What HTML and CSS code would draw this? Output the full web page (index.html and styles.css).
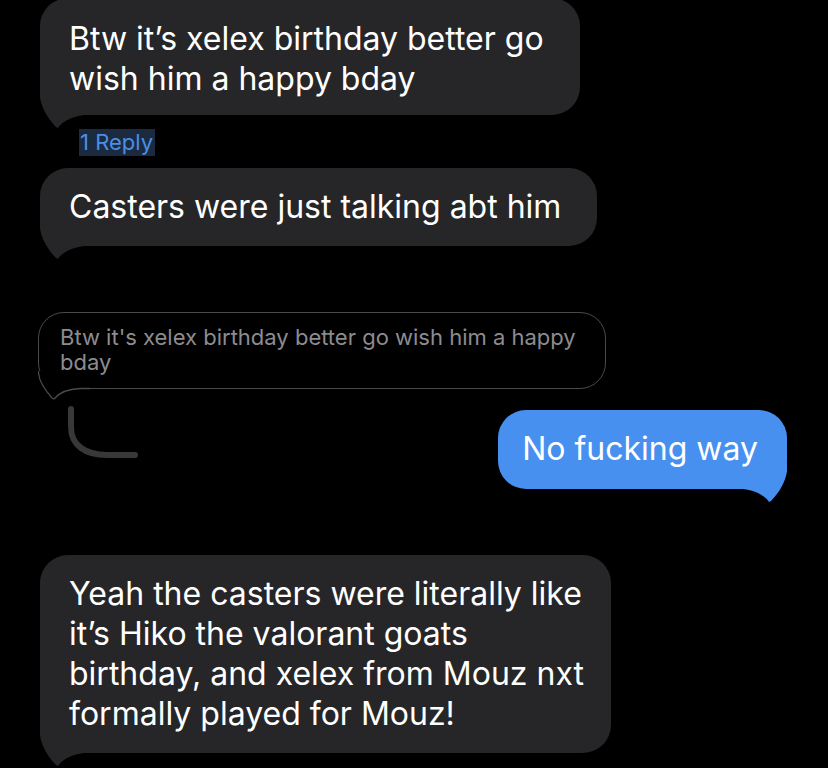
FILE: index.html
```html
<!DOCTYPE html>
<html>
<head>
<meta charset="utf-8">
<link rel="stylesheet" href="styles.css">
</head>
<body>
<div class="chat">
  <div class="bubble gray first">
    <span class="txt">Btw it’s xelex birthday better go<br>wish him a happy bday</span>
    <svg class="tail tail-left" width="50" height="40" viewBox="0 0 50 40"><path d="M0,0 L0,8 C1,18 8,30 16,38 L18,39 C21,34 29,28 44,26 L50,26 L50,0 Z"/></svg>
  </div>
  <div class="reply"><span class="reply-sel">1 Reply</span></div>
  <div class="bubble gray second">
    <span class="txt">Casters were just talking abt him</span>
    <svg class="tail tail-left" width="50" height="40" viewBox="0 0 50 40"><path d="M0,0 L0,8 C1,18 8,30 16,38 L18,39 C21,34 29,28 44,26 L50,26 L50,0 Z"/></svg>
  </div>
  <div class="quote">
    <span class="txt">Btw it's xelex birthday better go wish him a happy<br>bday</span>
    <svg class="qtail" width="52" height="30" viewBox="0 10 52 30">
      <path class="qfill" d="M0.5,10 L0.5,12 C1,18 6,28 14,37 L16,38 C20,33 28,28 42,27.5 L52,27.5 L52,10 Z"/>
      <path class="qstroke" d="M0.5,10 L0.5,12 C1,18 6,28 14,37 L16,38 C20,33 28,28 42,27.5 L52,27.5"/>
    </svg>
  </div>
  <div class="row">
    <svg class="connector" width="80" height="56" viewBox="0 0 80 56"><path d="M4,4 L4,22 C4,40 18,50 40,50 L68,50"/></svg>
    <div class="bubble blue">
      <span class="txt">No fucking way</span>
      <svg class="tail tail-right" width="50" height="40" viewBox="0 0 50 40"><path d="M0,0 L0,8 C1,18 8,30 16,38 L18,39 C21,34 29,28 44,26 L50,26 L50,0 Z"/></svg>
    </div>
  </div>
  <div class="bubble gray fourth">
    <span class="txt">Yeah the casters were literally like<br>it’s Hiko the valorant goats<br>birthday, and xelex from Mouz nxt<br>formally played for Mouz!</span>
    <svg class="tail tail-left" width="50" height="40" viewBox="0 0 50 40"><path d="M0,0 L0,8 C1,18 8,30 16,38 L18,39 C21,34 29,28 44,26 L50,26 L50,0 Z"/></svg>
  </div>
</div>
</body>
</html>
```

FILE: styles.css
```css
html, body {
  margin: 0;
  padding: 0;
  background: #000;
}
body {
  width: 828px;
  height: 768px;
  overflow: hidden;
  font-family: Inter, "Liberation Sans", sans-serif;
}
.chat {
  display: flex;
  flex-direction: column;
  align-items: flex-start;
  padding: 0 41px 0 40px;
  margin-top: -2px;
}
.txt {
  position: relative;
  z-index: 1;
}
.bubble {
  position: relative;
  font-size: 32px;
  line-height: 40px;
  color: #fff;
  padding: 19px 36px 19px 29px;
  border-radius: 28px;
}
.gray { background: #262628; }
.gray .tail path { fill: #262628; }
.blue {
  background: #4790f0;
  padding: 19px 29px 20px 24px;
  margin-top: 5px;
}
.blue .tail path { fill: #4790f0; }
.first { padding-top: 21px; padding-bottom: 16px; }
.tail {
  position: absolute;
  bottom: -14px;
}
.tail-left { left: 0; }
.tail-right { right: 0; transform: scaleX(-1); }
.reply {
  margin: 14px 0 0 39px;
  height: 28px;
}
.reply-sel {
  display: inline-block;
  background: #1c2a40;
  color: #4a8fe4;
  font-size: 22px;
  line-height: 27px;
  padding: 0 2px 0 1px;
}
.second { margin-top: 11px; }
.quote {
  position: relative;
  margin: 66px 0 0 -2px;
  border: 1.3px solid #4a4a4c;
  border-radius: 26px;
  padding: 12px 29px 13px 21px;
  font-size: 22px;
  line-height: 25px;
  color: #8c8c90;
}
.qtail {
  position: absolute;
  left: -1.3px;
  bottom: -13px;
}
.qfill { fill: #000; }
.qstroke { fill: none; stroke: #4a4a4c; stroke-width: 1.3; }
.row {
  align-self: stretch;
  display: flex;
  justify-content: space-between;
  align-items: flex-start;
  margin-top: 16px;
}
.connector { margin-left: 27px; }
.connector path {
  fill: none;
  stroke: #38383a;
  stroke-width: 6;
  stroke-linecap: round;
}
.fourth { margin-top: 66px; padding-right: 27px; }
```
